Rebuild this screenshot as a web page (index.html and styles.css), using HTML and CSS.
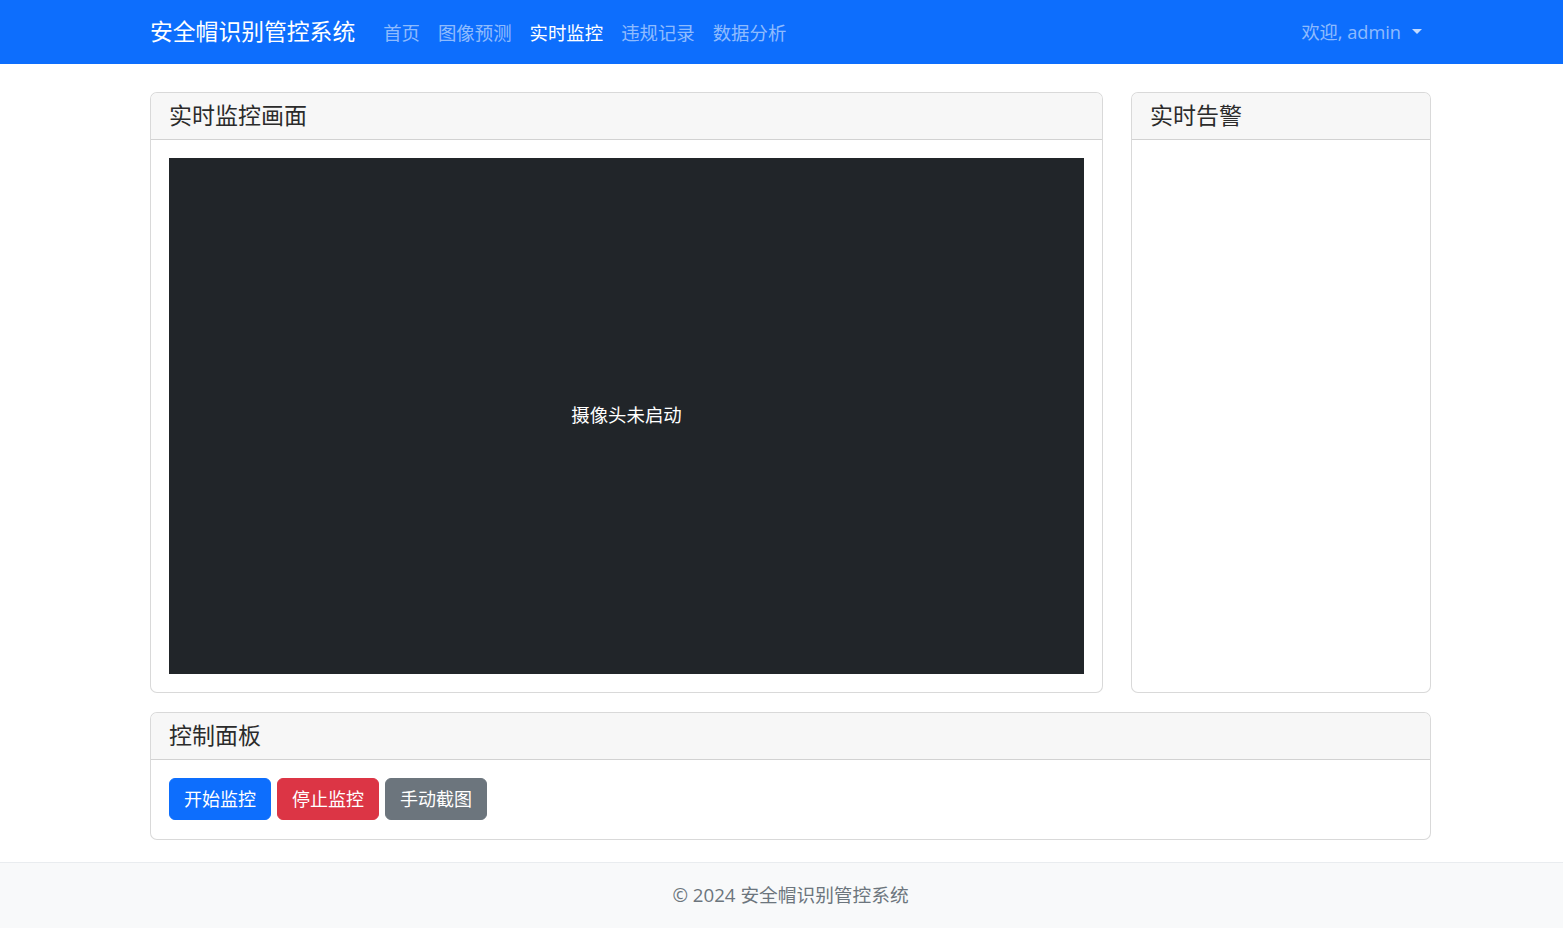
FILE: index.html
```html
<!DOCTYPE html>
<html lang="zh-CN">
<head>
<meta charset="utf-8">
<title>实时监控 - 安全帽识别管控系统</title>
<link rel="stylesheet" href="styles.css">
</head>
<body>
<nav class="navbar">
  <div class="nav-inner">
    <a class="brand" href="#">安全帽识别管控系统</a>
    <ul class="nav-links">
      <li><a class="nav-link" href="#">首页</a></li>
      <li><a class="nav-link" href="#">图像预测</a></li>
      <li><a class="nav-link active" href="#">实时监控</a></li>
      <li><a class="nav-link" href="#">违规记录</a></li>
      <li><a class="nav-link" href="#">数据分析</a></li>
    </ul>
    <a class="nav-link user-toggle" href="#">欢迎, admin<span class="caret"></span></a>
  </div>
</nav>

<main class="container">
  <div class="top-row">
    <section class="card">
      <div class="card-header">实时监控画面</div>
      <div class="card-body">
        <div class="video-box">摄像头未启动</div>
      </div>
    </section>
    <section class="card">
      <div class="card-header">实时告警</div>
      <div class="card-body"></div>
    </section>
  </div>

  <section class="card control-card">
    <div class="card-header">控制面板</div>
    <div class="card-body buttons">
      <button class="btn btn-primary">开始监控</button>
      <button class="btn btn-danger">停止监控</button>
      <button class="btn btn-secondary">手动截图</button>
    </div>
  </section>
</main>

<footer class="footer">
  <div class="footer-inner">© 2024 安全帽识别管控系统</div>
</footer>
</body>
</html>
```

FILE: styles.css
```css
* { box-sizing: border-box; }

html, body {
  margin: 0;
  padding: 0;
}

body {
  font-family: "Open Sans", "Noto Sans CJK SC", sans-serif;
  font-size: 18px;
  line-height: 1.5;
  color: #212529;
  background: #fff;
}

a { text-decoration: none; }

.navbar {
  background: #0d6efd;
  height: 64px;
}

.nav-inner {
  width: 1281px;
  margin-left: 150px;
  height: 64px;
  display: flex;
  align-items: center;
}

.brand {
  color: #fff;
  font-size: 22.8px;
  line-height: 1.2;
  margin-right: 19px;
}

.nav-links {
  list-style: none;
  margin: 0;
  padding: 0;
  display: flex;
  flex: 1;
}

.nav-link {
  display: block;
  padding: 9px 9px;
  color: rgba(255, 255, 255, 0.55);
  font-size: 18.4px;
  line-height: 27px;
}

.nav-link.active {
  color: #fff;
}

.user-toggle {
  display: flex;
  align-items: center;
  font-size: 18.2px;
}

.caret {
  display: inline-block;
  margin-left: 11px;
  width: 0;
  height: 0;
  border-top: 5.4px solid rgba(255, 255, 255, 0.75);
  border-left: 5.4px solid transparent;
  border-right: 5.4px solid transparent;
  margin-top: -2px;
}

.container {
  width: 1281px;
  margin-left: 150px;
  padding-top: 28px;
}

.top-row {
  display: grid;
  grid-template-columns: 953px 300px;
  gap: 28px;
  margin-bottom: 19px;
}

.card {
  border: 1px solid rgba(0, 0, 0, 0.15);
  border-radius: 7px;
  background: #fff;
  display: flex;
  flex-direction: column;
  overflow: hidden;
}

.card-header {
  background: #f7f7f7;
  border-bottom: 1px solid rgba(0, 0, 0, 0.15);
  padding: 0 18px;
  height: 47px;
  display: flex;
  align-items: center;
  font-size: 23px;
  line-height: 1.2;
  color: #2b2b2b;
}

.card-body {
  padding: 18px;
  flex: 1;
}

.video-box {
  background: #212529;
  height: 516px;
  display: flex;
  align-items: center;
  justify-content: center;
  color: #fff;
  font-size: 18.4px;
  padding-bottom: 2px;
}

.control-card .card-body {
  padding: 18px 18px 19px;
}

.buttons {
  display: flex;
  gap: 6px;
}

.btn {
  font-family: inherit;
  font-size: 18px;
  line-height: 27px;
  height: 42px;
  padding: 0 14px;
  border: 1px solid transparent;
  border-radius: 6px;
  color: #fff;
  cursor: pointer;
}

.btn-primary { background: #0d6efd; border-color: #0d6efd; }
.btn-danger { background: #dc3545; border-color: #dc3545; }
.btn-secondary { background: #6c757d; border-color: #6c757d; }

.footer {
  margin-top: 22px;
  background: #f8f9fa;
  border-top: 1px solid #e9ecef;
  height: 68px;
  display: flex;
  align-items: center;
  color: #6c757d;
  font-size: 18.7px;
}

.footer-inner {
  width: 1281px;
  margin-left: 150px;
  text-align: center;
  padding-bottom: 2px;
}
```
